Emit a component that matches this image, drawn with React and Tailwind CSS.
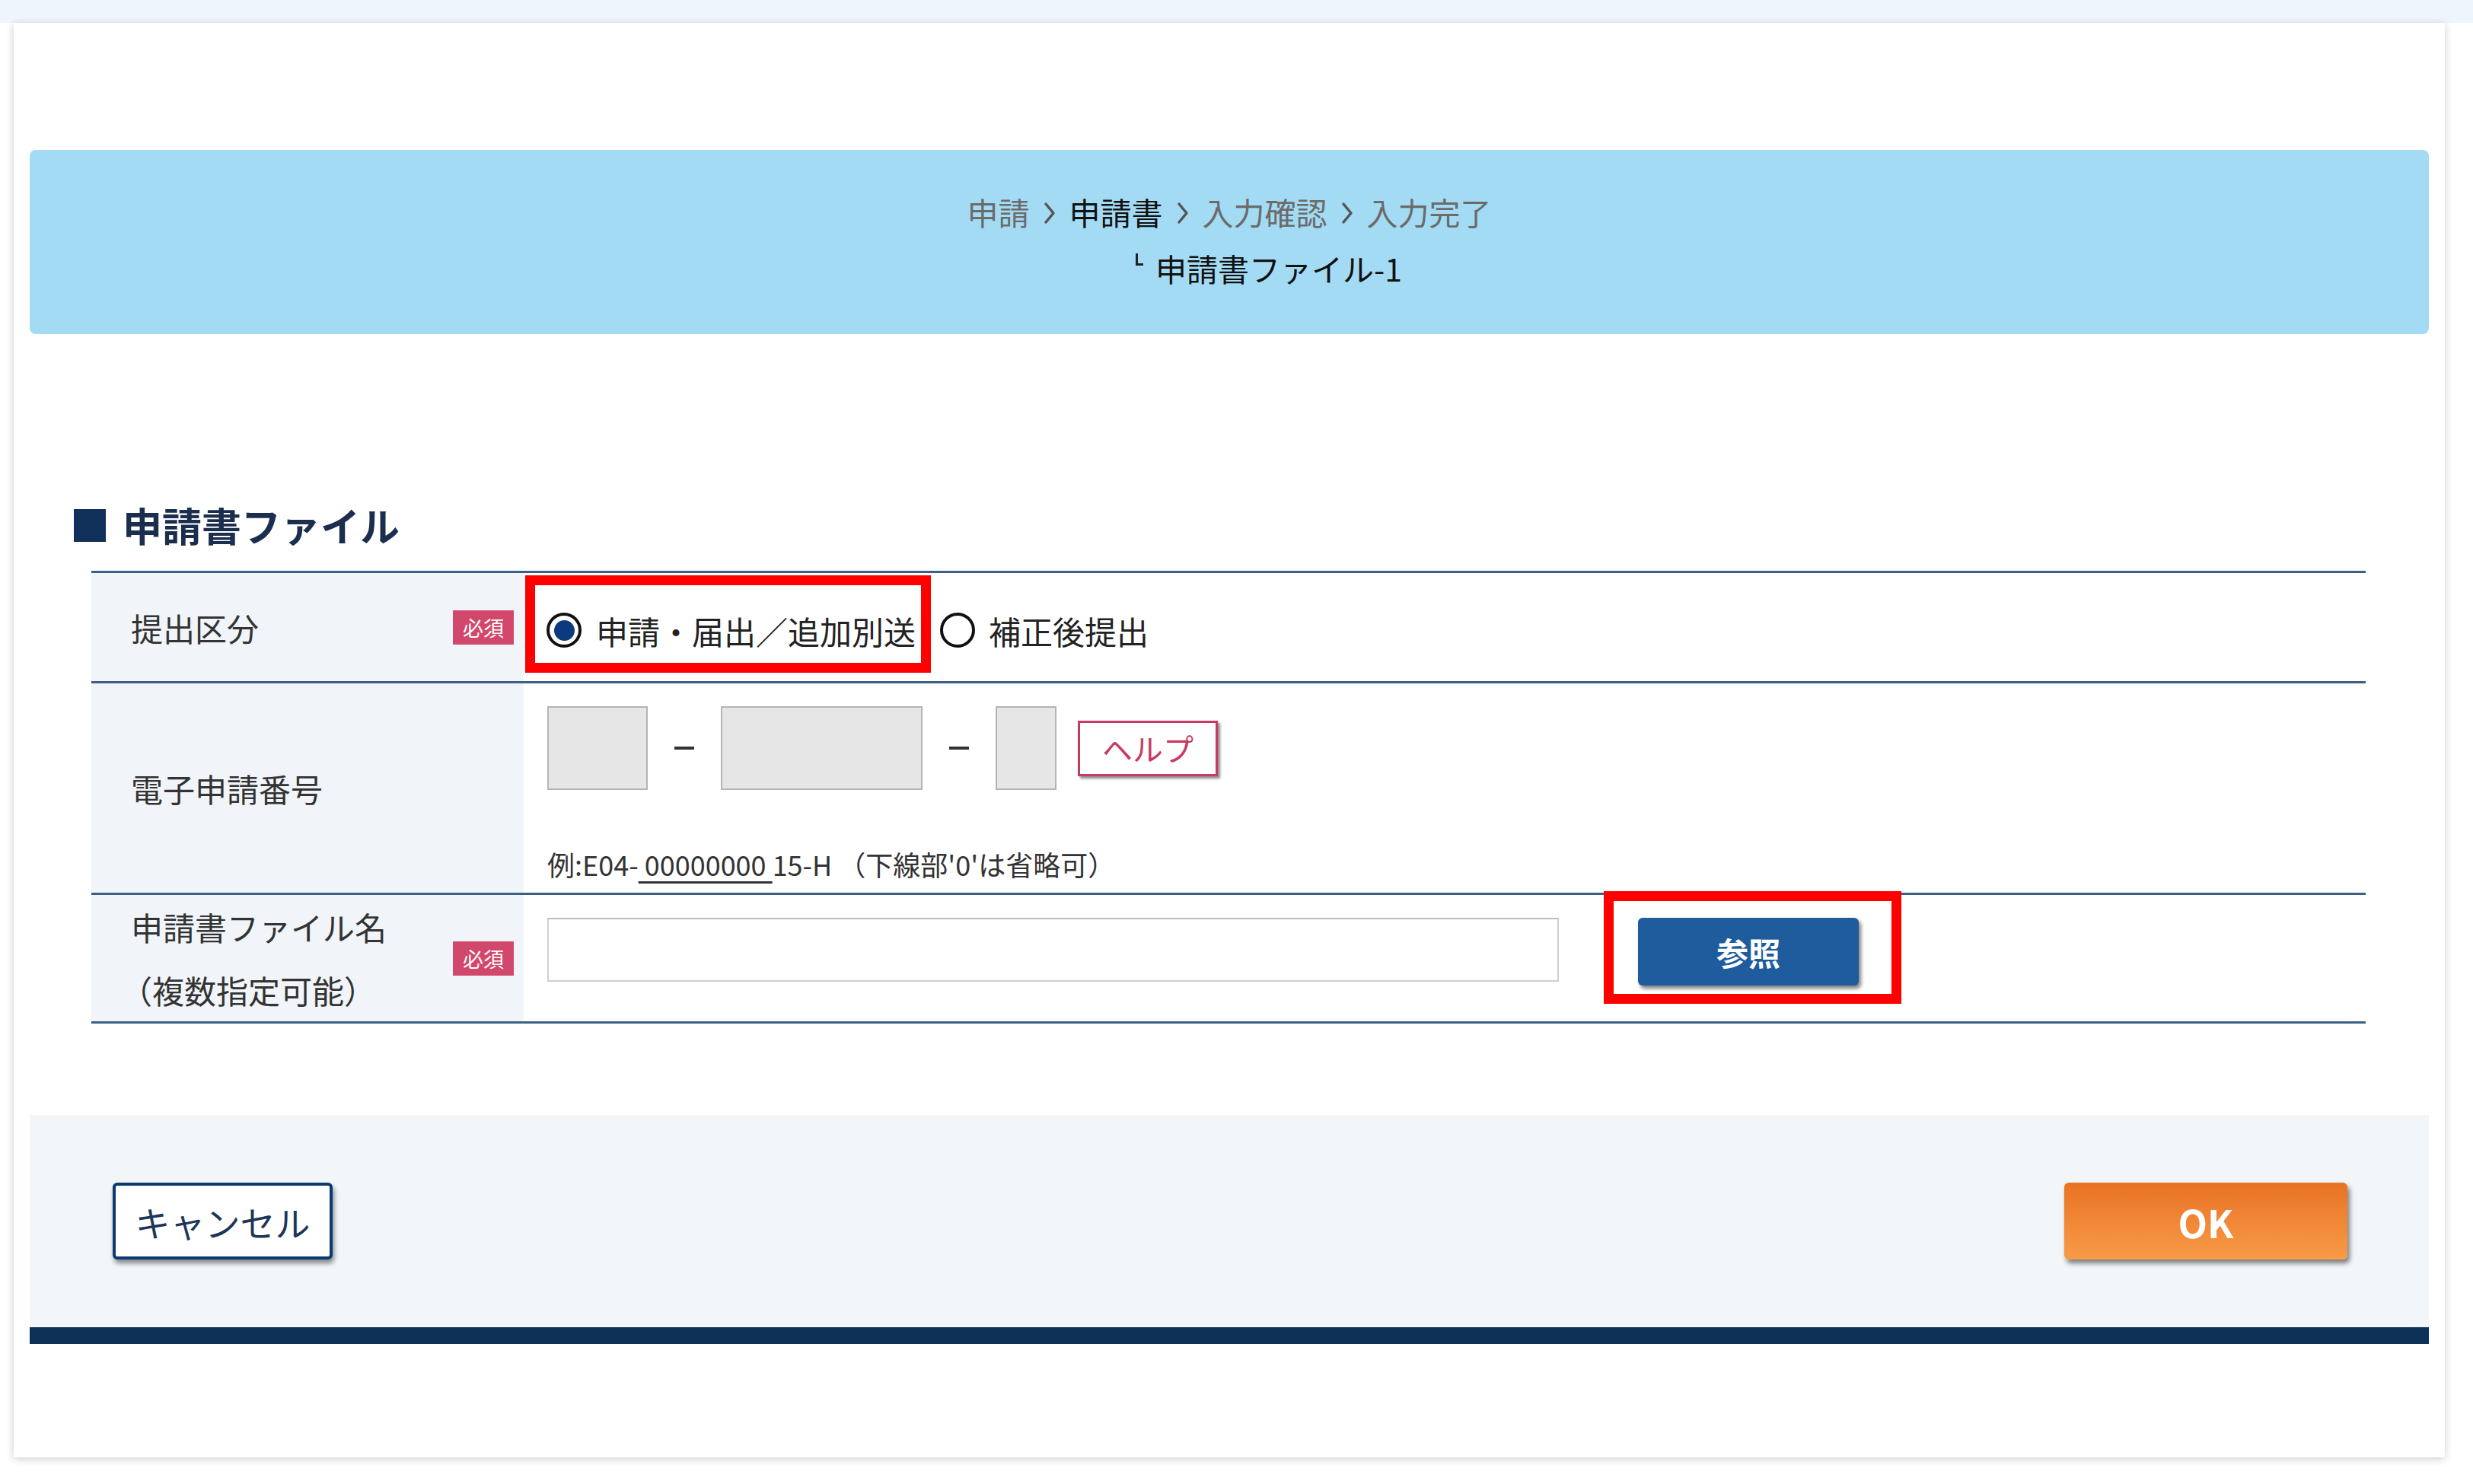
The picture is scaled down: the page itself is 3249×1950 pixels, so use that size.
import React from "react";

const Badge = () => (
  <span className="flex h-[45px] w-[80px] shrink-0 items-center justify-center bg-[#d2486c] text-[27px] leading-none text-white">
    必須
  </span>
);

const Radio = ({ checked }) => (
  <span className="flex h-[46px] w-[46px] shrink-0 items-center justify-center rounded-full border-[4px] border-[#111] bg-white">
    {checked && <span className="h-[27px] w-[27px] rounded-full bg-[#0b3b7c]" />}
  </span>
);

const Chevron = () => (
  <svg width="16" height="30" viewBox="0 0 16 30" className="mx-[18px] mt-[4px] shrink-0">
    <path d="M3 3 L13 15 L3 27" fill="none" stroke="#555" strokeWidth="3.5" strokeLinecap="round" strokeLinejoin="round" />
  </svg>
);

const Dash = () => <span className="mx-[35px] h-[4px] w-[26px] bg-[#333]" />;

export default function App() {
  return (
    <div className="min-h-[1950px] w-full bg-white font-['Noto_Sans_CJK_JP','Noto_Sans',sans-serif] text-[#333]">
      <div className="h-[30px] w-full bg-[#eff5fd]" />

      <div className="pl-[18px] pr-[37px]">
        {/* card */}
        <div className="bg-white px-[21px] pt-[167px] pb-[149px] shadow-[0_2px_10px_rgba(0,0,0,0.2)]">
          {/* breadcrumb banner */}
          <div className="flex h-[242px] flex-col items-center justify-center rounded-[8px] bg-[#a3dbf4] pb-[6px]">
            <div className="flex items-center text-[41px] leading-[74px] text-[#6b6b6b]">
              <span>申請</span>
              <Chevron />
              <span className="text-[#111]">申請書</span>
              <Chevron />
              <span>入力確認</span>
              <Chevron />
              <span>入力完了</span>
            </div>
            <div className="flex items-start pl-[104px] text-[41px] leading-[74px] text-[#111]">
              <span className="mr-[16px] mt-[18px] h-[16px] w-[10px] border-b-[3px] border-l-[3px] border-[#222]" />
              <span>申請書ファイル-1</span>
            </div>
          </div>

          {/* section title */}
          <div className="mt-[221px] flex h-[60px] items-center pl-[58px]">
            <span className="mr-[22px] h-[43px] w-[42px] bg-[#13305a]" />
            <span className="text-[52px] font-bold leading-none text-[#1c2e4e]">申請書ファイル</span>
          </div>

          {/* form table */}
          <div className="mt-[30px] ml-[81px] mr-[83px] border-b-[3px] border-[#3d5f86] text-[42px]">
            {/* row 1 */}
            <div className="flex border-t-[3px] border-[#3d5f86]">
              <div className="flex h-[142px] w-[568px] shrink-0 items-center justify-between bg-[#f1f5f9] pl-[52px] pr-[13px]">
                <span>提出区分</span>
                <Badge />
              </div>
              <div className="relative flex flex-1 items-center pl-[30px] pt-[8px]">
                <Radio checked />
                <span className="ml-[19px] text-[#222]">申請・届出／追加別送</span>
                <span className="ml-[32px]">
                  <Radio />
                </span>
                <span className="ml-[18px] text-[#222]">補正後提出</span>
                <div className="pointer-events-none absolute left-[2px] top-[3px] h-[128px] w-[533px] border-[13px] border-[#ff0000]" />
              </div>
            </div>

            {/* row 2 */}
            <div className="flex border-t-[3px] border-[#3d5f86]">
              <div className="flex w-[568px] shrink-0 items-center bg-[#f1f5f9] pl-[52px]">
                <span>電子申請番号</span>
              </div>
              <div className="flex flex-1 flex-col pl-[31px] pt-[30px] pb-[13px]">
                <div className="flex items-center">
                  <span className="h-[110px] w-[132px] border-[2px] border-[#b5b5b5] bg-[#e6e6e6]" />
                  <Dash />
                  <span className="h-[110px] w-[265px] border-[2px] border-[#b5b5b5] bg-[#e6e6e6]" />
                  <Dash />
                  <span className="h-[110px] w-[80px] border-[2px] border-[#b5b5b5] bg-[#e6e6e6]" />
                  <span className="ml-[28px] flex h-[73px] w-[184px] items-center justify-center border-[3px] border-[#c93a62] bg-white text-[40px] leading-none text-[#c93a62] shadow-[3px_3px_3px_rgba(0,0,0,0.45)]">
                    ヘルプ
                  </span>
                </div>
                <div className="mt-[72px] text-[36px] leading-[50px] text-[#333]">
                  例:E04-<span className="underline decoration-[3px] underline-offset-[7px]">&nbsp;00000000&nbsp;</span>15-H&nbsp;（下線部'0'は省略可）
                </div>
              </div>
            </div>

            {/* row 3 */}
            <div className="flex border-t-[3px] border-[#3d5f86]">
              <div className="flex w-[568px] shrink-0 items-center justify-between bg-[#f1f5f9] pl-[52px] pr-[13px]">
                <div className="leading-[83px]">
                  <div>申請書ファイル名</div>
                  <div className="-ml-[14px]">（複数指定可能）</div>
                </div>
                <Badge />
              </div>
              <div className="flex flex-1 items-start pl-[31px] pt-[30px]">
                <span className="h-[84px] w-[1329px] border-[2px] border-[#cfcfcf] border-t-[#bdbdbd] bg-white" />
                <div className="relative ml-[104px]">
                  <button className="flex h-[89px] w-[290px] items-center justify-center rounded-[6px] bg-[#1f5c9e] text-[42px] font-bold leading-none text-white shadow-[3px_4px_5px_rgba(0,0,0,0.5)]">
                    参照
                  </button>
                  <div className="pointer-events-none absolute -left-[45px] -top-[35px] h-[148px] w-[391px] border-[13px] border-[#ff0000]" />
                </div>
              </div>
            </div>
          </div>

          {/* footer */}
          <div className="mt-[120px]">
            <div className="flex h-[279px] items-center justify-between bg-[#f2f6f9] pl-[109px] pr-[107px]">
              <button className="flex h-[101px] w-[289px] items-center justify-center rounded-[6px] border-[4px] border-[#0d3a6e] bg-white text-[46px] leading-none text-[#1d3557] shadow-[2px_5px_6px_rgba(0,0,0,0.45)]">
                キャンセル
              </button>
              <button className="flex h-[101px] w-[372px] items-center justify-center rounded-[6px] bg-gradient-to-b from-[#e97224] to-[#f89b46] text-[50px] font-bold leading-none text-white shadow-[3px_5px_6px_rgba(0,0,0,0.5)]">
                OK
              </button>
            </div>
            <div className="h-[22px] bg-[#0d3057]" />
          </div>
        </div>
      </div>
    </div>
  );
}
